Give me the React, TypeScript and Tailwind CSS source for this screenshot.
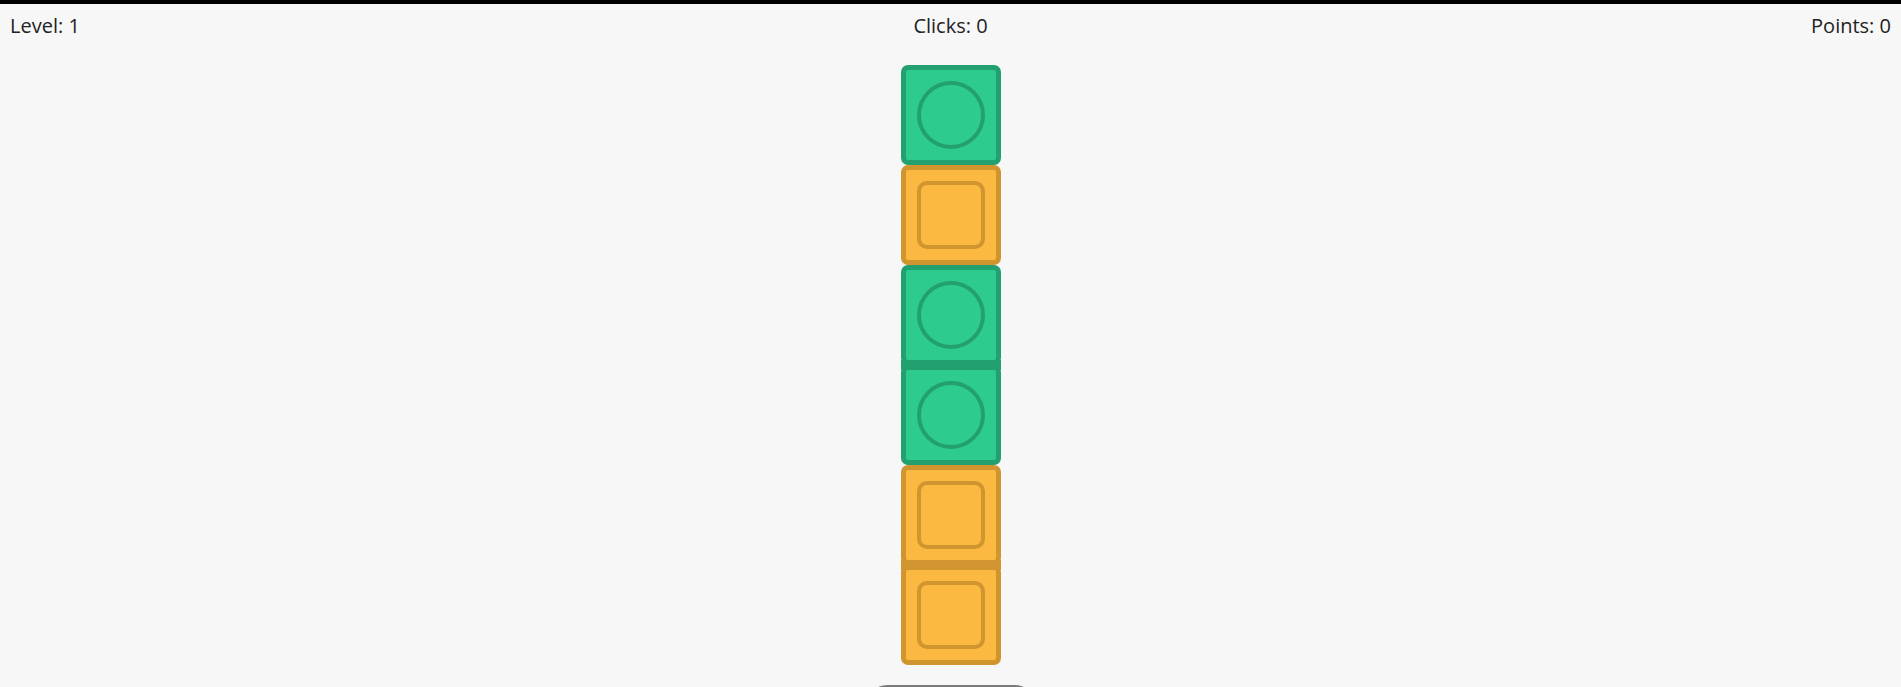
import React, { useState } from "react";

type Kind = "circle" | "square";

const START: Kind[] = ["circle", "square", "circle", "circle", "square", "square"];

function Tile({ kind, joined }: { kind: Kind; joined: boolean }) {
    const green = kind === "circle";
    return (
        <div className="relative w-[100px] h-[100px]">
            <div
                className={
                    green
                        ? "w-full h-full rounded-[7px] border-[5px] border-[#22a06f] bg-[#2ecb8e] flex items-center justify-center"
                        : "w-full h-full rounded-[7px] border-[5px] border-[#d19530] bg-[#fbb941] flex items-center justify-center"
                }
            >
                {green ? (
                    <div className="w-[68px] h-[68px] rounded-full border-4 border-[#22a06f]" />
                ) : (
                    <div className="w-[68px] h-[68px] rounded-[10px] border-4 border-[#d19530]" />
                )}
            </div>
            {/* connector between two tiles of the same kind */}
            {joined && (
                <div
                    className={
                        green
                            ? "absolute left-0 right-0 -bottom-[5px] h-[10px] bg-[#22a06f]"
                            : "absolute left-0 right-0 -bottom-[5px] h-[10px] bg-[#d19530]"
                    }
                />
            )}
        </div>
    );
}

export default function App() {
    const [tiles] = useState<Kind[]>(START);
    const [clicks] = useState(0);

    return (
        <div
            className="min-h-screen bg-[#f7f7f7] border-t-4 border-black text-[#222222]"
            style={{ fontFamily: '"Open Sans", "Noto Sans", sans-serif' }}
        >
            <div className="grid grid-cols-3 px-2.5 pt-2 text-[20px] leading-7">
                <span>Level: 1</span>
                <span className="text-center">Clicks: {clicks}</span>
                <span className="text-right">Points: 0</span>
            </div>

            <div className="flex flex-col items-center mt-[25px]">
                {tiles.map((t, i) => (
                    <Tile key={i} kind={t} joined={tiles[i + 1] === t} />
                ))}
                <button aria-label="Restart" className="mt-5 w-[168px] h-10 rounded-full bg-[#7a7a7a]" />
            </div>
        </div>
    );
}
